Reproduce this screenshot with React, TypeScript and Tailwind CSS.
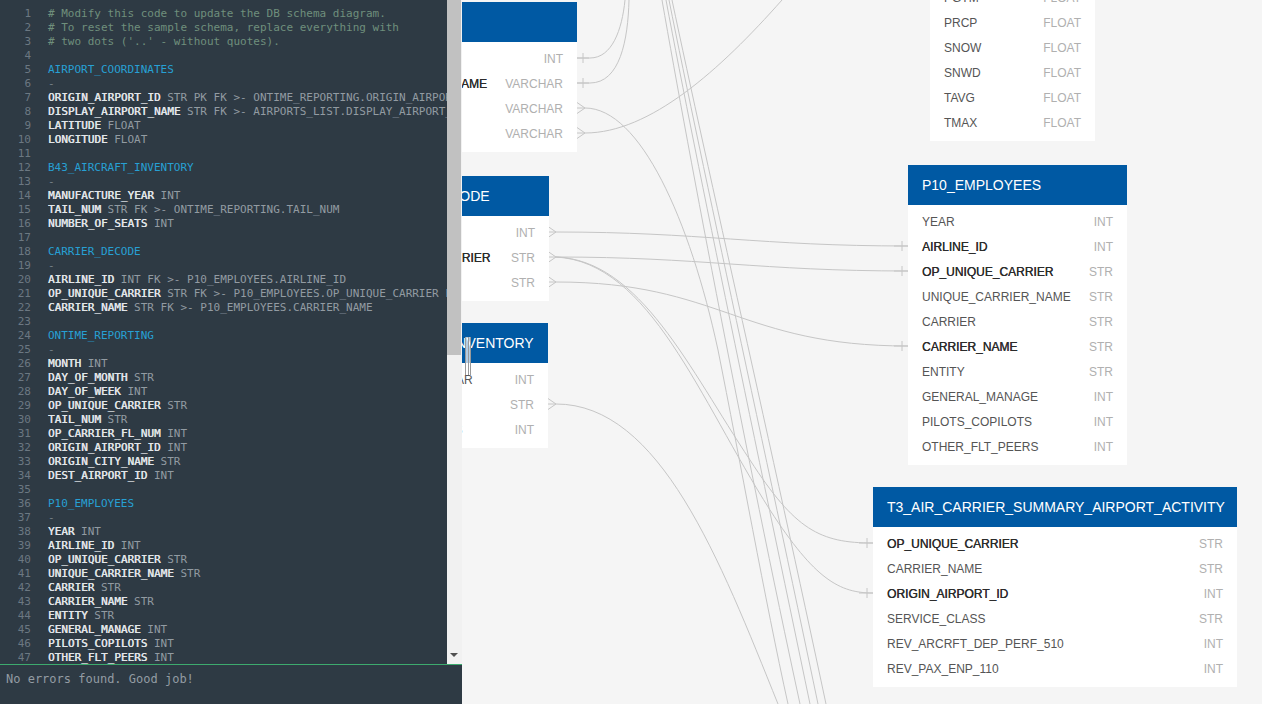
import React from 'react';

interface Field {
  name: string;
  type: string;
  key?: boolean;
}

interface TableProps {
  name: string;
  fields: Field[];
  className: string;
}

const code: string[] = [
  '# Modify this code to update the DB schema diagram.',
  '# To reset the sample schema, replace everything with',
  "# two dots ('..' - without quotes).",
  '',
  'AIRPORT_COORDINATES',
  '-',
  'ORIGIN_AIRPORT_ID STR PK FK >- ONTIME_REPORTING.ORIGIN_AIRPORT_ID',
  'DISPLAY_AIRPORT_NAME STR FK >- AIRPORTS_LIST.DISPLAY_AIRPORT_NAME',
  'LATITUDE FLOAT',
  'LONGITUDE FLOAT',
  '',
  'B43_AIRCRAFT_INVENTORY',
  '-',
  'MANUFACTURE_YEAR INT',
  'TAIL_NUM STR FK >- ONTIME_REPORTING.TAIL_NUM',
  'NUMBER_OF_SEATS INT',
  '',
  'CARRIER_DECODE',
  '-',
  'AIRLINE_ID INT FK >- P10_EMPLOYEES.AIRLINE_ID',
  'OP_UNIQUE_CARRIER STR FK >- P10_EMPLOYEES.OP_UNIQUE_CARRIER FK >- T3_AIR_CARRIER_SUMMARY_AIRPORT_ACTIVITY.OP_UNIQUE_CARRIER',
  'CARRIER_NAME STR FK >- P10_EMPLOYEES.CARRIER_NAME',
  '',
  'ONTIME_REPORTING',
  '-',
  'MONTH INT',
  'DAY_OF_MONTH STR',
  'DAY_OF_WEEK INT',
  'OP_UNIQUE_CARRIER STR',
  'TAIL_NUM STR',
  'OP_CARRIER_FL_NUM INT',
  'ORIGIN_AIRPORT_ID INT',
  'ORIGIN_CITY_NAME STR',
  'DEST_AIRPORT_ID INT',
  '',
  'P10_EMPLOYEES',
  '-',
  'YEAR INT',
  'AIRLINE_ID INT',
  'OP_UNIQUE_CARRIER STR',
  'UNIQUE_CARRIER_NAME STR',
  'CARRIER STR',
  'CARRIER_NAME STR',
  'ENTITY STR',
  'GENERAL_MANAGE INT',
  'PILOTS_COPILOTS INT',
  'OTHER_FLT_PEERS INT',
  '',
  'T3_AIR_CARRIER_SUMMARY_AIRPORT_ACTIVITY',
  '-',
];

const CodeLine: React.FC<{ n: number; text: string }> = ({ n, text }) => {
  let body: React.ReactNode = null;
  if (text.startsWith('#')) {
    body = <span className="text-[#6f8f7c]">{text}</span>;
  } else if (text === '-') {
    body = <span className="text-[#76818a]">-</span>;
  } else if (text && !text.includes(' ')) {
    body = <span className="text-[#27a0d4]">{text}</span>;
  } else if (text) {
    const i = text.indexOf(' ');
    body = (
      <>
        <span className="text-[#e2e6e9] [text-shadow:0.35px_0_0_#e2e6e9]">{text.slice(0, i)}</span>
        <span className="text-[#929ba2]">{text.slice(i)}</span>
      </>
    );
  }
  return (
    <div className="flex h-[14px] leading-[14px] whitespace-pre">
      <span className="w-[31px] shrink-0 text-right text-[#6c7882]">{n}</span>
      <span className="ml-[17px]">{body}</span>
    </div>
  );
};

const Table: React.FC<TableProps> = ({ name, fields, className }) => (
  <div className={`absolute font-['Liberation_Sans',Arial,sans-serif] ${className}`}>
    <div className="flex h-10 items-center whitespace-nowrap bg-[#0059a3] px-[14px] text-[14px] text-white">
      {name}
    </div>
    <div className="bg-white pt-[4px] pb-[6px]">
      {fields.map((f) => (
        <div key={f.name} className="flex h-[25px] items-center justify-between whitespace-nowrap px-[14px] text-[12px]">
          <span className={f.key ? 'text-[#2b2b2b] [text-shadow:0.3px_0_0_#2b2b2b]' : 'text-[#555]'}>{f.name}</span>
          <span className="ml-4 text-[#b0b0b0]">{f.type}</span>
        </div>
      ))}
    </div>
  </div>
);

const links = [
  'M577,58 L590,58 C612,58 622,30 625,0',
  'M577,83 L590,83 C620,83 628,40 629,0',
  'M585,108 C640,108 690,220 718,350 C740,460 765,600 788,704',
  'M585,133 C650,133 720,70 782,0',
  'M556,232 C700,232 760,246 908,246',
  'M556,257 C700,257 760,271 908,271',
  'M556,282 C720,282 740,346 908,346',
  'M556,257 C640,260 690,370 750,460 C795,530 820,543 873,543',
  'M556,257 C650,262 700,400 770,510 C815,580 840,593 873,593',
  'M556,404 C660,404 720,560 778,704',
  'M662,0 C690,160 745,450 800,704',
  'M666,0 C698,170 757,450 810,704',
  'M669,0 C703,170 765,450 818,704',
  'M672,0 C708,170 772,450 826,704',
];

const ticks: [number, number][] = [
  [583, 58], [583, 83], [902, 246], [902, 271], [902, 346], [867, 543], [867, 593],
];

const crows: [number, number][] = [
  [577, 108], [577, 133], [548, 232], [548, 257], [548, 282], [548, 404],
];

const Links: React.FC = () => (
  <svg className="absolute inset-0" width="800" height="704" viewBox="462 0 800 704" fill="none" stroke="#c6c6c6" strokeWidth="1">
    {links.map((d) => (
      <path key={d} d={d} />
    ))}
    {ticks.map(([x, y]) => (
      <path key={`t${x}-${y}`} d={`M${x},${y - 5} L${x},${y + 5} M${x - 8},${y} L${x + 6},${y}`} />
    ))}
    {crows.map(([x, y]) => (
      <path key={`c${x}-${y}`} d={`M${x},${y - 5.5} L${x + 8},${y} L${x},${y + 5.5} M${x},${y} L${x + 8},${y}`} />
    ))}
  </svg>
);

const App: React.FC = () => {
  return (
    <div className="flex h-[704px] w-[1262px] overflow-hidden bg-[#f5f5f5]">
      <div className="flex w-[462px] shrink-0 flex-col">
        <div className="flex h-[664px]">
          <div className="w-[447px] overflow-hidden bg-[#2e3a44] pt-[7px] font-['DejaVu_Sans_Mono',monospace] text-[11px]">
            {code.map((line, i) => (
              <CodeLine key={i} n={i + 1} text={line} />
            ))}
          </div>
          <div className="relative w-[15px] bg-[#f1f1f1]">
            <div className="h-[355px] w-[14px] bg-[#c1c1c1]" />
            <div className="absolute bottom-[7px] left-[3px] h-0 w-0 border-x-[4px] border-t-[4px] border-x-transparent border-t-[#505050]" />
          </div>
        </div>
        <div className="h-px bg-[#3daa6e]" />
        <div className="flex-1 bg-[#2e3a44] px-[6px] pt-[7px] font-['DejaVu_Sans_Mono',monospace] text-[12px] leading-[14px] text-[#939ca3]">
          No errors found. Good job!
        </div>
      </div>

      <div className="relative flex-1 overflow-hidden">
        <Links />

        <Table
          name="AIRPORTS_LIST"
          className="left-[-140px] top-[2px] w-[255px]"
          fields={[
            { name: 'AIRPORT_ID', type: 'INT' },
            { name: 'DISPLAY_AIRPORT_NAME', type: 'VARCHAR', key: true },
            { name: 'CITY_NAME', type: 'VARCHAR' },
            { name: 'STATE_NAME', type: 'VARCHAR' },
          ]}
        />
        <Table
          name="CARRIER_DECODE"
          className="left-[-117px] top-[176px] w-[204px]"
          fields={[
            { name: 'AIRLINE_ID', type: 'INT', key: true },
            { name: 'OP_UNIQUE_CARRIER', type: 'STR', key: true },
            { name: 'CARRIER_NAME', type: 'STR', key: true },
          ]}
        />
        <Table
          name="B43_AIRCRAFT_INVENTORY"
          className="left-[-134px] top-[323px] w-[220px]"
          fields={[
            { name: 'MANUFACTURE_YEAR', type: 'INT' },
            { name: 'TAIL_NUM', type: 'STR', key: true },
            { name: 'NUMBER_OF_SEATS', type: 'INT' },
          ]}
        />
        <Table
          name="WEATHER"
          className="left-[468px] top-[-84px] w-[165px]"
          fields={['AWND', 'PGTM', 'PRCP', 'SNOW', 'SNWD', 'TAVG', 'TMAX'].map((n) => ({ name: n, type: 'FLOAT' }))}
        />
        <Table
          name="P10_EMPLOYEES"
          className="left-[446px] top-[165px] w-[219px]"
          fields={[
            { name: 'YEAR', type: 'INT' },
            { name: 'AIRLINE_ID', type: 'INT', key: true },
            { name: 'OP_UNIQUE_CARRIER', type: 'STR', key: true },
            { name: 'UNIQUE_CARRIER_NAME', type: 'STR' },
            { name: 'CARRIER', type: 'STR' },
            { name: 'CARRIER_NAME', type: 'STR', key: true },
            { name: 'ENTITY', type: 'STR' },
            { name: 'GENERAL_MANAGE', type: 'INT' },
            { name: 'PILOTS_COPILOTS', type: 'INT' },
            { name: 'OTHER_FLT_PEERS', type: 'INT' },
          ]}
        />
        <Table
          name="T3_AIR_CARRIER_SUMMARY_AIRPORT_ACTIVITY"
          className="left-[411px] top-[487px] w-[364px]"
          fields={[
            { name: 'OP_UNIQUE_CARRIER', type: 'STR', key: true },
            { name: 'CARRIER_NAME', type: 'STR' },
            { name: 'ORIGIN_AIRPORT_ID', type: 'INT', key: true },
            { name: 'SERVICE_CLASS', type: 'STR' },
            { name: 'REV_ARCRFT_DEP_PERF_510', type: 'INT' },
            { name: 'REV_PAX_ENP_110', type: 'INT' },
          ]}
        />

        {/* resize grip left over the canvas */}
        <div className="absolute left-[3px] top-[337px] flex h-[38px] w-[6px] justify-between border-x border-[#9a9a9a] bg-white/70">
          <div className="mx-auto w-px bg-[#9a9a9a]" />
        </div>
      </div>
    </div>
  );
};

export default App;
